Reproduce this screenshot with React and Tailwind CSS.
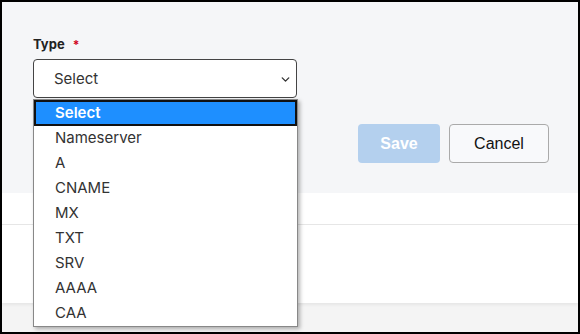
import { ChevronDown } from 'lucide-react';

const options = ['Nameserver', 'A', 'CNAME', 'MX', 'TXT', 'SRV', 'AAAA', 'CAA'];

export default function App() {
  return (
    <div className="relative h-[334px] w-[580px] overflow-hidden border-2 border-black bg-[#f4f4f4] font-['Inter',sans-serif]">
      {/* form panel */}
      <div className="flex h-[191px] items-start justify-between bg-[#f5f6f8] pl-[31px] pr-[29px] pt-[33px]">
        <div className="w-[264px]">
          <label className="flex items-center gap-[8px] text-[13px] font-bold text-[#222]">
            Type <span className="text-[12px] text-[#d0021b]">*</span>
          </label>
          <div className="mt-[4px] flex h-[39px] items-center justify-between rounded-[4px] border border-[#444] bg-white pl-[20px] pr-[4px] pt-[3px] text-[15px] text-[#333]">
            <span>Select</span>
            <ChevronDown className="h-[13px] w-[13px] text-[#333]" strokeWidth={2.5} />
          </div>
        </div>
        <div className="mt-[89px] flex gap-[9px] font-['Liberation_Sans',sans-serif]">
          <button className="h-[39px] w-[82px] rounded-[4px] bg-[#b4d0ee] text-[16px] font-bold text-white">
            Save
          </button>
          <button className="h-[39px] w-[100px] rounded-[4px] border border-[#aaa] bg-[#f8f9fb] text-[16px] text-[#111]">
            Cancel
          </button>
        </div>
      </div>

      {/* white band */}
      <div className="h-[110px] bg-white shadow-[0_2px_3px_rgba(0,0,0,0.06)]">
        <div className="h-[31px]" />
        <div className="border-t border-[#e6e6e6]" />
      </div>

      {/* native dropdown list */}
      <div className="absolute left-[31px] top-[97px] w-[265px] border border-[#888] bg-white text-[15px] text-[#333] shadow-[2px_2px_4px_rgba(0,0,0,0.3)]">
        <div className="flex h-[26px] items-center border-2 border-[#111] bg-[#1e8fff] pl-[19px] font-semibold text-white">
          Select
        </div>
        {options.map((o) => (
          <div key={o} className="flex h-[25px] items-center pl-[21px]">
            {o}
          </div>
        ))}
      </div>
    </div>
  );
}
